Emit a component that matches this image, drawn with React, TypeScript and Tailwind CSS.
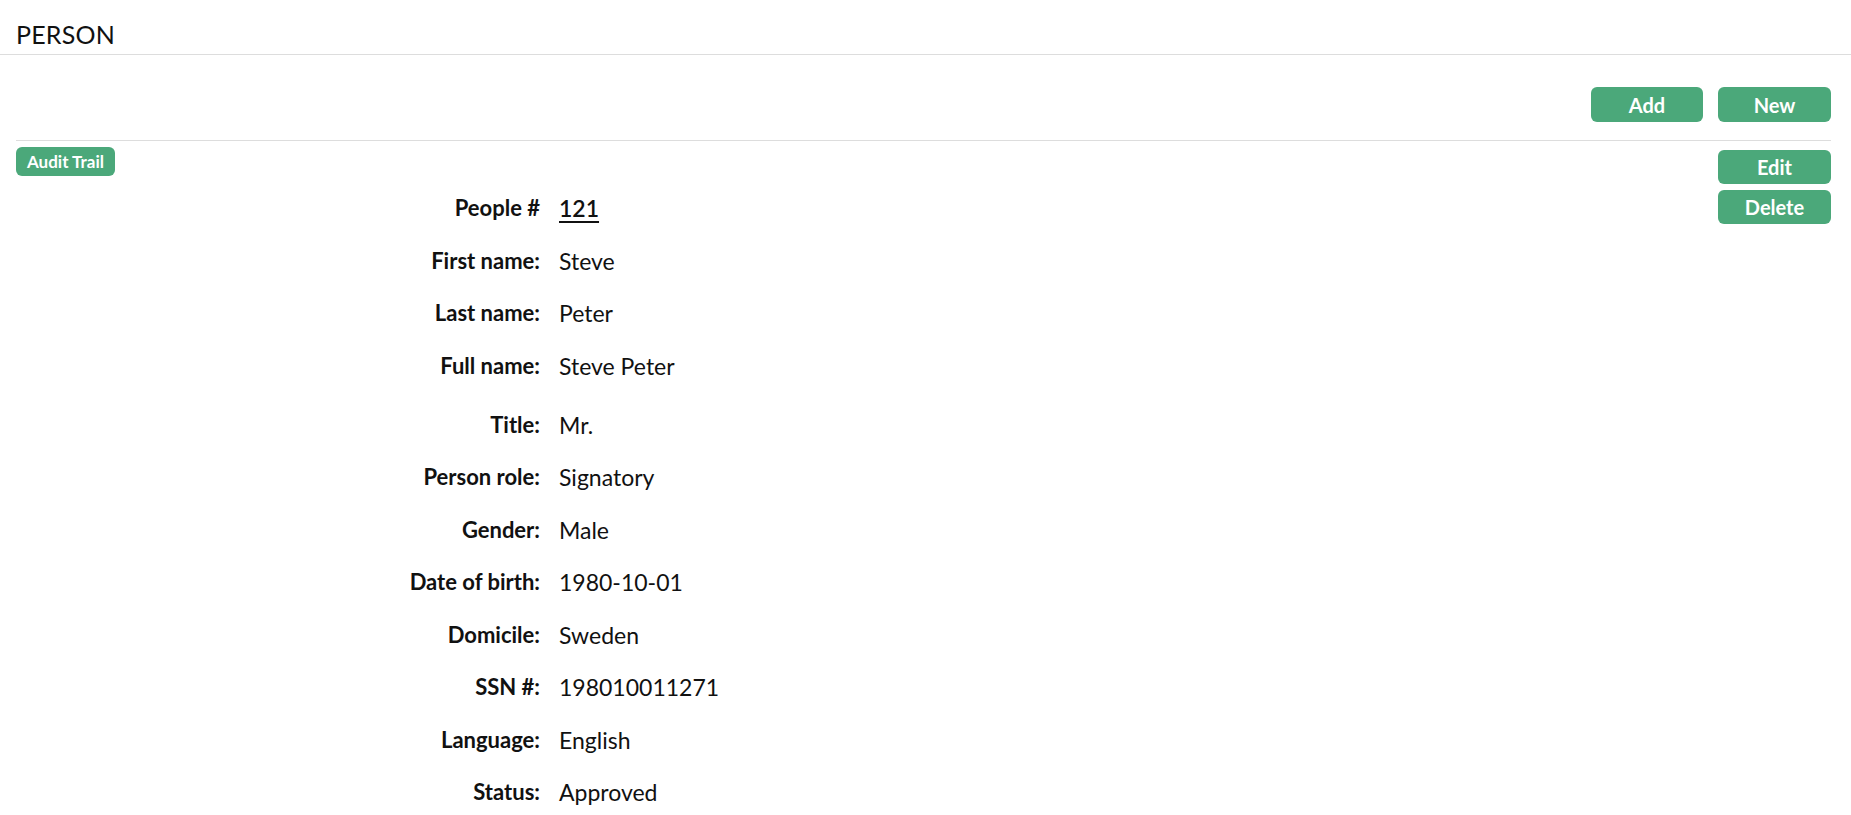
import React from "react";

const fields: { label: string; value: string; link?: boolean; extra?: boolean }[] = [
  { label: "People #", value: "121", link: true },
  { label: "First name:", value: "Steve" },
  { label: "Last name:", value: "Peter" },
  { label: "Full name:", value: "Steve Peter", extra: true },
  { label: "Title:", value: "Mr." },
  { label: "Person role:", value: "Signatory" },
  { label: "Gender:", value: "Male" },
  { label: "Date of birth:", value: "1980-10-01" },
  { label: "Domicile:", value: "Sweden" },
  { label: "SSN #:", value: "198010011271" },
  { label: "Language:", value: "English" },
  { label: "Status:", value: "Approved" },
];

function GreenButton({ children, className = "" }: { children: React.ReactNode; className?: string }) {
  return (
    <button
      className={
        "flex items-center justify-center rounded-[6px] bg-[#4ba87a] font-bold text-white " + className
      }
    >
      {children}
    </button>
  );
}

export default function App() {
  return (
    <div className="min-h-[815px] bg-white text-[#111] [font-family:Lato,'Open_Sans',sans-serif]">
      <div className="h-[55px] border-b border-[#dddddd] pl-[16px] pt-[18px]">
        <h1 className="text-[25px] leading-[32px] font-normal tracking-[0.2px]">PERSON</h1>
      </div>
      <div className="pl-[16px] pr-[20px]">
        <div className="flex justify-end gap-[15px] border-b border-[#dddddd] pt-[32px] pb-[18px]">
          <GreenButton className="h-[35px] w-[112px] text-[20px]">Add</GreenButton>
          <GreenButton className="h-[35px] w-[113px] text-[20px]">New</GreenButton>
        </div>
        <div className="flex">
          <div className="flex-1">
            <div className="pt-[6px]">
              <GreenButton className="h-[29px] w-[99px] text-[17px]">Audit Trail</GreenButton>
            </div>
            <div className="mt-[6px] grid grid-cols-[524px_auto] justify-start gap-x-[19px]">
              {fields.map((f) => (
                <React.Fragment key={f.label}>
                  <div
                    className={
                      "text-right text-[22px] font-bold leading-[52.5px] " + (f.extra ? "mb-[6.5px]" : "")
                    }
                  >
                    {f.label}
                  </div>
                  <div
                    className={
                      "text-[23px] leading-[52.5px] " + (f.extra ? "mb-[6.5px]" : "")
                    }
                  >
                    {f.link ? (
                      <a className="font-semibold underline underline-offset-[4px]">{f.value}</a>
                    ) : (
                      f.value
                    )}
                  </div>
                </React.Fragment>
              ))}
            </div>
          </div>
          <div className="flex flex-col gap-[6px] pt-[9px]">
            <GreenButton className="h-[34px] w-[113px] text-[20px]">Edit</GreenButton>
            <GreenButton className="h-[34px] w-[113px] text-[20px]">Delete</GreenButton>
          </div>
        </div>
      </div>
    </div>
  );
}
